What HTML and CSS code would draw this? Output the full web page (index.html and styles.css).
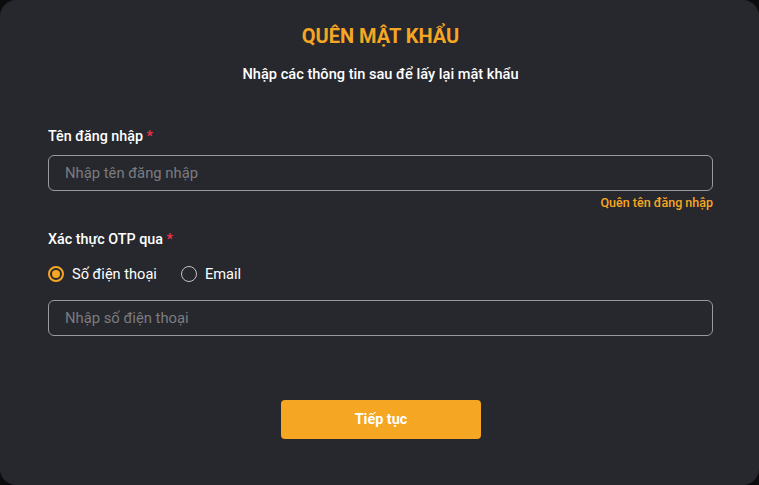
FILE: index.html
```html
<!DOCTYPE html>
<html lang="vi">
<head>
    <meta charset="UTF-8">
    <meta name="viewport" content="width=device-width, initial-scale=1.0">
    <title>Quên mật khẩu</title>
    <link rel="stylesheet" href="styles.css">
</head>
<body>
    <div class="modal">
        <h2 class="modal-title">QUÊN MẬT KHẨU</h2>
        <p class="modal-subtitle">Nhập các thông tin sau để lấy lại mật khẩu</p>

        <form class="form" onsubmit="return false;">
            <div class="field">
                <label class="field-label" for="username">Tên đăng nhập <span class="required">*</span></label>
                <input class="field-input" id="username" type="text" placeholder="Nhập tên đăng nhập">
                <div class="field-help">
                    <a href="#" class="link">Quên tên đăng nhập</a>
                </div>
            </div>

            <div class="field field-otp">
                <span class="field-label">Xác thực OTP qua <span class="required">*</span></span>
                <div class="radio-group">
                    <label class="radio">
                        <input type="radio" name="otp" value="phone" checked>
                        <span class="radio-mark"></span>
                        Số điện thoại
                    </label>
                    <label class="radio">
                        <input type="radio" name="otp" value="email">
                        <span class="radio-mark"></span>
                        Email
                    </label>
                </div>
                <input class="field-input" id="phone" type="text" placeholder="Nhập số điện thoại">
            </div>

            <div class="actions">
                <button type="submit" class="btn-primary">Tiếp tục</button>
            </div>
        </form>
    </div>
</body>
</html>
```

FILE: styles.css
```css
:root {
    --bg-color: #0c0c0e;
    --card-bg: #27282d;
    --text-color: #ffffff;
    --accent-color: #f5a623;
    --border-color: #9a9a9c;
    --muted-color: #7b7c80;
    --danger-color: #f5314e;
}

* {
    box-sizing: border-box;
}

body {
    font-family: Roboto, 'Noto Sans', sans-serif;
    background-color: var(--bg-color);
    color: var(--text-color);
    margin: 0;
    padding: 0;
}

.modal {
    width: 759px;
    height: 485px;
    background-color: var(--card-bg);
    border-radius: 16px;
    padding: 24px 46px 0 48px;
}

.modal-title {
    margin: 0;
    font-size: 20px;
    line-height: 24px;
    font-weight: 700;
    color: var(--accent-color);
    text-align: center;
}

.modal-subtitle {
    margin: 16px 0 0;
    font-size: 14.6px;
    line-height: 20px;
    font-weight: 500;
    text-align: center;
}

.form {
    margin-top: 42px;
}

.field-label {
    display: block;
    font-size: 14.3px;
    line-height: 20px;
    font-weight: 500;
    margin-bottom: 9px;
}

.required {
    color: var(--danger-color);
}

.field-input {
    display: block;
    width: 100%;
    height: 36px;
    padding: 0 16px;
    background: transparent;
    border: 1px solid var(--border-color);
    border-radius: 6px;
    color: var(--text-color);
    font-family: inherit;
    font-size: 14.8px;
    outline: none;
}

.field-input::placeholder {
    color: var(--muted-color);
}

.field-help {
    display: flex;
    justify-content: flex-end;
    margin-top: 4px;
}

.link {
    font-size: 12.5px;
    line-height: 16px;
    font-weight: 500;
    color: var(--accent-color);
    text-decoration: none;
}

.field-otp {
    margin-top: 18px;
}

.field-otp .field-label {
    margin-bottom: 15px;
}

/* Radio buttons */
.radio-group {
    display: flex;
    gap: 24px;
    margin-bottom: 16px;
}

.radio {
    display: flex;
    align-items: center;
    gap: 8px;
    font-size: 14.6px;
    line-height: 20px;
    cursor: pointer;
}

.radio input {
    display: none;
}

.radio-mark {
    width: 16px;
    height: 16px;
    border: 1.5px solid #c4c4c6;
    border-radius: 50%;
    display: flex;
    align-items: center;
    justify-content: center;
}

.radio input:checked + .radio-mark {
    border: 2px solid var(--accent-color);
}

.radio input:checked + .radio-mark::after {
    content: "";
    width: 8px;
    height: 8px;
    border-radius: 50%;
    background-color: var(--accent-color);
}

.actions {
    display: flex;
    justify-content: center;
    margin-top: 64px;
    padding-left: 1px;
}

.btn-primary {
    width: 200px;
    height: 39px;
    background-color: var(--accent-color);
    color: white;
    border: none;
    border-radius: 4px;
    font-family: inherit;
    font-size: 14.4px;
    font-weight: 700;
    cursor: pointer;
}
```
